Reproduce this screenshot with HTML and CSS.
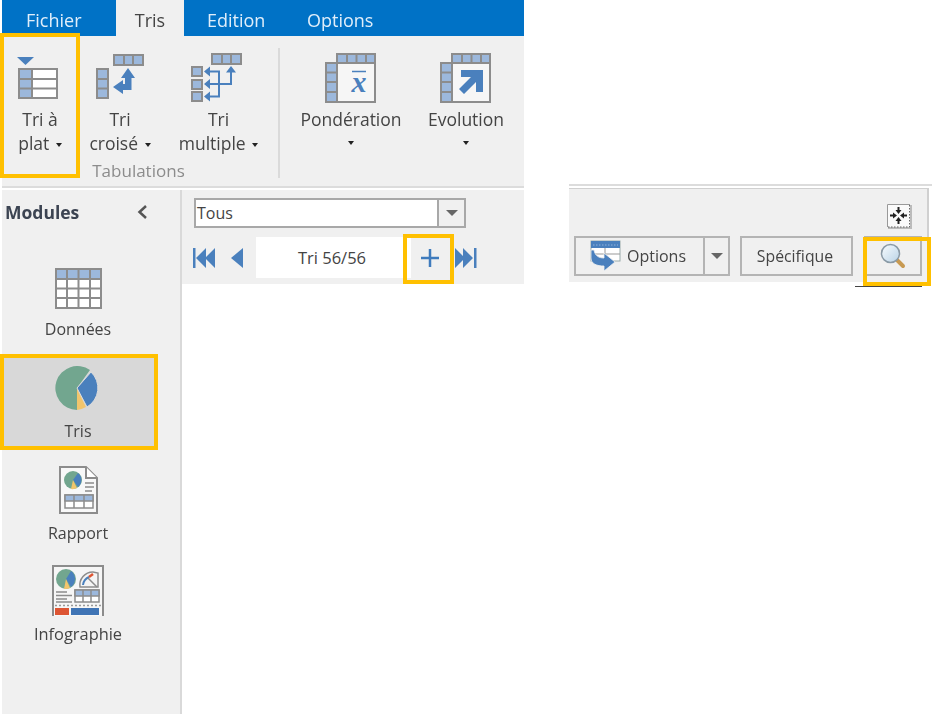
FILE: index.html
```html
<!DOCTYPE html>
<html lang="fr">
<head>
<meta charset="utf-8">
<title>Tris</title>
<link rel="stylesheet" href="styles.css">
</head>
<body>
<div class="canvas">
  <section class="app">
    <nav class="tabs">
      <span class="tab tab-fichier">Fichier</span>
      <span class="tab tab-active">Tris</span>
      <span class="tab tab-edition">Edition</span>
      <span class="tab tab-options">Options</span>
    </nav>
    <div class="ribbon">
      <div class="group">
        <div class="group-buttons">
          <div class="rb rb-plat">
            <svg class="rb-icon rb-icon-plat" width="42" height="52" viewBox="0 0 42 52">
              <path d="M0 5h17l-8.500 8z" fill="#4a80bd"/>
              <rect x="2" y="17" width="38" height="29" fill="#fff" stroke="#8c8c8c" stroke-width="2"/>
              <rect x="2" y="17" width="13" height="29" fill="#9cb8dc" stroke="#8c8c8c" stroke-width="2"/>
              <path d="M2 27h38M2 36.500h38" stroke="#8c8c8c" stroke-width="2"/>
            </svg>
            <span class="rb-text">Tri à</span>
            <span class="rb-text">plat <i class="caret"></i></span>
            <span class="hl hl-plat"></span>
          </div>
          <div class="rb rb-croise">
            <svg class="rb-icon" width="48" height="52" viewBox="0 0 48 52">
              <rect x="18" y="3" width="29" height="10" fill="#9cb8dc" stroke="#8c8c8c" stroke-width="2"/>
              <path d="M28 3v10M37 3v10" stroke="#8c8c8c" stroke-width="2"/>
              <rect x="1" y="17" width="11" height="29" fill="#9cb8dc" stroke="#8c8c8c" stroke-width="2"/>
              <path d="M1 27h11M1 36.500h11" stroke="#8c8c8c" stroke-width="2"/>
              <path d="M32 16L39 26H35.500V38H27V42L17 35L27 28V32H29V26H25Z" fill="#4a80bd"/>
            </svg>
            <span class="rb-text">Tri</span>
            <span class="rb-text">croisé <i class="caret"></i></span>
          </div>
          <div class="rb rb-multiple">
            <svg class="rb-icon rb-icon-multi" width="52" height="52" viewBox="0 0 52 52">
              <rect x="21" y="2" width="29" height="10" fill="#9cb8dc" stroke="#8c8c8c" stroke-width="2"/>
              <path d="M31 2v10M40 2v10" stroke="#8c8c8c" stroke-width="2"/>
              <g fill="#9cb8dc" stroke="#8c8c8c" stroke-width="2">
                <rect x="1" y="15" width="10" height="9"/>
                <rect x="1" y="28" width="10" height="9"/>
                <rect x="1" y="40" width="10" height="9"/>
              </g>
              <path d="M17 19.500h11v25H17M17 32h23V20" fill="none" stroke="#4a80bd" stroke-width="2"/>
              <path d="M13 19.500l6-5v10zM13 32l6-5v10zM13 44.500l6-5v10zM40 14l5 6.500H35z" fill="#4a80bd"/>
            </svg>
            <span class="rb-text">Tri</span>
            <span class="rb-text">multiple <i class="caret"></i></span>
          </div>
        </div>
        <div class="group-label">Tabulations</div>
      </div>
      <div class="ribbon-sep"></div>
      <div class="rb rb-pond">
        <svg class="rb-icon" width="52" height="52" viewBox="0 0 52 52">
          <rect x="12" y="2" width="38" height="48" fill="#f6f6f6" stroke="#8c8c8c" stroke-width="2"/>
          <rect x="12" y="2" width="38" height="9" fill="#9cb8dc" stroke="#8c8c8c" stroke-width="2"/>
          <path d="M22 2v9M31.500 2v9M41 2v9" stroke="#8c8c8c" stroke-width="2"/>
          <rect x="1" y="11" width="11" height="39" fill="#9cb8dc" stroke="#8c8c8c" stroke-width="2"/>
          <path d="M1 20.500h11M1 30h11M1 40h11" stroke="#8c8c8c" stroke-width="2"/>
          <path d="M27 19.500h14" stroke="#4a80bd" stroke-width="1.500"/>
          <text x="34" y="40" class="xbar">x</text>
        </svg>
        <span class="rb-text">Pondération</span>
        <i class="caret caret-solo"></i>
      </div>
      <div class="rb rb-evol">
        <svg class="rb-icon" width="52" height="52" viewBox="0 0 52 52">
          <rect x="12" y="2" width="38" height="48" fill="#f6f6f6" stroke="#8c8c8c" stroke-width="2"/>
          <rect x="12" y="2" width="38" height="9" fill="#9cb8dc" stroke="#8c8c8c" stroke-width="2"/>
          <path d="M22 2v9M31.500 2v9M41 2v9" stroke="#8c8c8c" stroke-width="2"/>
          <rect x="1" y="11" width="11" height="39" fill="#9cb8dc" stroke="#8c8c8c" stroke-width="2"/>
          <path d="M1 20.500h11M1 30h11M1 40h11" stroke="#8c8c8c" stroke-width="2"/>
          <path d="M21 18h22v22h-7V30L24 42l-5-5 12-12H21z" fill="#4a80bd"/>
        </svg>
        <span class="rb-text">Evolution</span>
        <i class="caret caret-solo"></i>
      </div>
    </div>
    <div class="work">
      <aside class="sidebar">
        <header class="side-head">
          <b class="side-title">Modules</b>
          <svg class="chevron" width="12" height="16" viewBox="0 0 12 16"><path d="M10 2L3.500 8l6.500 6" fill="none" stroke="#555" stroke-width="2.500"/></svg>
        </header>
        <div class="mod mod-donnees">
          <svg class="mod-icon" width="47" height="41" viewBox="0 0 47 41">
            <rect x="1" y="1" width="45" height="39" fill="#fff" stroke="#8c8c8c" stroke-width="2"/>
            <rect x="1" y="1" width="45" height="10" fill="#9cb8dc" stroke="#8c8c8c" stroke-width="2"/>
            <path d="M12 1v39M23.500 1v39M35 1v39M1 20.500h45M1 30h45" stroke="#8c8c8c" stroke-width="2"/>
          </svg>
          <span class="mod-label">Données</span>
        </div>
        <div class="mod mod-tris">
          <svg class="mod-icon" width="46" height="46" viewBox="0 0 46 46">
            <path d="M22 22L35 4A22 22 0 1 0 22 44z" fill="#72a68f"/>
            <path d="M22 22l14-16a22 22 0 0 1-4 35z" fill="#4a80bd" stroke="#dcdcdc" stroke-width="1"/>
            <path d="M22 23l9 18a22 22 0 0 1-9 3z" fill="#f2c56c"/>
          </svg>
          <span class="mod-label">Tris</span>
          <span class="hl hl-tris"></span>
        </div>
        <div class="mod mod-rapport">
          <svg class="mod-icon" width="39" height="48" viewBox="0 0 39 48">
            <path d="M1 1h26l11 11v35H1z" fill="#f8f8f8" stroke="#8c8c8c" stroke-width="2"/>
            <path d="M27 1v11h11" fill="#fff" stroke="#8c8c8c" stroke-width="2"/>
            <circle cx="14" cy="14" r="9" fill="#72a68f"/>
            <path d="M14 14l5-7a9 9 0 0 1 0 14z" fill="#4a80bd"/>
            <path d="M14 14l4 8a9 9 0 0 1-6 1z" fill="#f2c56c"/>
            <path d="M26 17h9M26 21h9M26 25h7" stroke="#8c8c8c" stroke-width="1.500"/>
            <rect x="6" y="29" width="28" height="13" fill="#fff" stroke="#8c8c8c" stroke-width="1.500"/>
            <rect x="6" y="29" width="28" height="6" fill="#9cb8dc" stroke="#8c8c8c" stroke-width="1.500"/>
            <path d="M15 29v13M25 29v13" stroke="#8c8c8c" stroke-width="1.500"/>
          </svg>
          <span class="mod-label">Rapport</span>
        </div>
        <div class="mod mod-info">
          <svg class="mod-icon" width="52" height="51" viewBox="0 0 52 51">
            <path d="M1 51V1h50v50" fill="#f6f6f6" stroke="#8c8c8c" stroke-width="2"/>
            <circle cx="14" cy="14" r="10" fill="#72a68f"/>
            <path d="M14 14l5-8a10 10 0 0 1 0 16z" fill="#4a80bd"/>
            <path d="M14 14l4 9a10 10 0 0 1-6 1z" fill="#f2c56c"/>
            <path d="M28 22a13 13 0 0 1 13-15l5 1v14z" fill="#f4f4f4" stroke="#8c8c8c" stroke-width="1.500"/>
            <path d="M31 20a10 10 0 0 1 6-8" fill="none" stroke="#4a80bd" stroke-width="2"/>
            <path d="M37 12l4-3" stroke="#dd5533" stroke-width="2.500"/>
            <path d="M36 13l9 9" stroke="#8c8c8c" stroke-width="1.500"/>
            <path d="M4 27h11M4 30.500h16M4 34h11M4 37h16" stroke="#8c8c8c" stroke-width="1.300"/>
            <rect x="23" y="25" width="24" height="12" fill="#fff" stroke="#8c8c8c" stroke-width="1.500"/>
            <rect x="23" y="25" width="24" height="6" fill="#9cb8dc" stroke="#8c8c8c" stroke-width="1.500"/>
            <path d="M31 25v12M39 25v12" stroke="#8c8c8c" stroke-width="1.500"/>
            <path d="M3 40.500h46" stroke="#999" stroke-width="1.500" stroke-dasharray="2 2"/>
            <rect x="3" y="43" width="14" height="7" fill="#dd5533"/>
            <rect x="19" y="43" width="28" height="7" fill="#3f74b5"/>
          </svg>
          <span class="mod-label">Infographie</span>
        </div>
      </aside>
      <main class="main">
        <div class="toolbar">
          <div class="combo">
            <span class="combo-value">Tous</span>
            <span class="combo-btn"><i class="tri-down"></i></span>
          </div>
          <div class="pager">
            <svg class="pg pg-first" width="23" height="22" viewBox="0 0 23 22"><path d="M1 1h2.500v20H1zM14 1v20L4 11zM23 1v20L13 11z" fill="#4a80bd"/></svg>
            <svg class="pg pg-prev" width="13" height="22" viewBox="0 0 13 22"><path d="M13 1v20L1 11z" fill="#4a80bd"/></svg>
            <div class="pg-field">
              <span class="pg-value">Tri 56/56</span>
              <span class="pg-add">
                <svg width="18" height="18" viewBox="0 0 18 18"><path d="M9 0v18M0 9h18" stroke="#3f7bbd" stroke-width="2.500"/></svg>
                <span class="hl hl-add"></span>
              </span>
            </div>
            <svg class="pg pg-last" width="22" height="22" viewBox="0 0 22 22"><path d="M0 1v20L10 11zM8 1v20L18 11zM19 1h2.500v20H19z" fill="#4a80bd"/></svg>
          </div>
        </div>
      </main>
    </div>
  </section>

  <section class="panel">
    <div class="panel-row-top">
      <svg width="25" height="25" viewBox="0 0 25 25">
        <rect x="1" y="1" width="24" height="24" fill="#bbb"/>
        <rect x="0" y="0" width="23" height="23" fill="#fafafa"/>
        <path d="M.5 23V.500H23" fill="none" stroke="#999"/>
        <path d="M22.500 1v22H1" fill="none" stroke="#666" stroke-dasharray="1.500 1.500"/>
        <g fill="#222">
          <path d="M10.500 3h2v3h2l-3 4-3-4h2z"/>
          <path d="M10.500 20h2v-3h2l-3-4-3 4h2z"/>
          <path d="M3 10.500v2h3v2l4-3-4-3v2z"/>
          <path d="M20 10.500v2h-3v2l-4-3 4-3v2z"/>
        </g>
      </svg>
    </div>
    <div class="panel-row">
      <div class="split">
        <span class="split-main">
          <svg width="32" height="32" viewBox="0 0 32 32">
            <rect x="1" y="1" width="29" height="20" fill="#fff" stroke="#9aa" stroke-width="1"/>
            <rect x="1" y="1" width="29" height="7" fill="#4a80bd"/>
            <path d="M3 5h25" stroke="#8fb2dc" stroke-dasharray="1.500 1.500"/>
            <path d="M1 14h29M15 8v13" stroke="#999" stroke-width="1"/>
            <path d="M1 10v8c0 6 6 8 13 8v5l11-9-11-9v5c-5 0-9-2-10-8z" fill="#4a80bd" stroke="#f0f0f0" stroke-width=".8"/>
          </svg>
          Options
        </span>
        <span class="split-arrow"><i class="tri-down"></i></span>
      </div>
      <span class="btn btn-spec">Spécifique</span>
      <span class="btn btn-search">
        <svg width="26" height="26" viewBox="0 0 26 26">
          <defs>
            <linearGradient id="lens" x1="0" y1="0" x2="1" y2="1">
              <stop offset="0" stop-color="#f8fcff"/>
              <stop offset="1" stop-color="#b9d3e6"/>
            </linearGradient>
          </defs>
          <path d="M17 17l6 6" stroke="#c89a52" stroke-width="4" stroke-linecap="round"/>
          <circle cx="10.500" cy="10.500" r="9" fill="url(#lens)" stroke="#8a9aa6" stroke-width="1.500"/>
        </svg>
        <span class="hl hl-search"></span>
      </span>
    </div>
    <div class="panel-foot"></div>
  </section>
</div>
</body>
</html>
```
FILE: styles.css
```css
* { box-sizing: border-box; }
html, body { margin: 0; padding: 0; background: #fff; }
body { font-family: "Open Sans", "Noto Sans", sans-serif; color: #444; font-size: 16px; }
i { font-style: normal; }

.canvas { position: relative; width: 932px; height: 714px; overflow: hidden; filter: blur(0.4px); }
.app { position: absolute; left: 0; top: 0; width: 524px; height: 714px; display: flex; flex-direction: column; }
.panel { position: absolute; left: 569px; top: 184px; width: 363px; height: 104px; }

.hl { position: absolute; border: 4px solid #ffc000; pointer-events: none; }

/* tabs */
.tabs { height: 36px; margin-left: 2px; background: #0072c6; display: flex; color: #e0eefa; font-size: 18px; line-height: 40px; }
.tab { display: block; height: 36px; white-space: nowrap; }
.tab-fichier { width: 114px; padding-left: 24px; }
.tab-active { width: 68px; background: #f0f0f0; color: #444; text-align: center; }
.tab-edition { width: 100px; padding-left: 23px; }
.tab-options { padding-left: 23px; }

/* ribbon */
.ribbon { height: 152px; margin-left: 2px; padding-top: 16px; background: #f0f0f0; border-bottom: 2px solid #dcdcdc; display: flex; flex: none; font-size: 17.5px; }
.group { width: 273px; }
.group-buttons { display: flex; }
.group-label { text-align: center; color: #8c8c8c; line-height: 20px; margin-top: 6px; font-size: 17px; }
.rb { position: relative; display: flex; flex-direction: column; align-items: center; }
.rb-icon { display: block; margin-bottom: 3px; flex: none; }
.rb-icon-plat { margin-right: 4px; }
.rb-icon-multi { margin-right: 4px; }
.rb-text { line-height: 24px; white-space: nowrap; }
.rb-plat { width: 76px; }
.rb-croise { width: 84px; }
.rb-multiple { width: 113px; }
.rb-pond { width: 122px; margin-left: 10px; }
.rb-evol { width: 108px; }
.ribbon-sep { width: 2px; height: 130px; margin: -4px 0 0 3px; background: #dadada; }
.hl-plat { left: -2px; top: -19px; width: 80px; height: 145px; }
.caret { display: inline-block; width: 0; height: 0; border: 3.500px solid transparent; border-top: 4px solid #222; border-bottom: 0; vertical-align: 3px; margin-left: 2px; }
.caret-solo { display: block; margin: 10px 0 0; }
.xbar { font-family: "Liberation Serif", serif; font-style: italic; font-weight: bold; font-size: 30px; fill: #4a80bd; text-anchor: middle; }

/* work area */
.work { flex: 1; display: flex; min-height: 0; margin-top: 2px; }
.sidebar { width: 178px; margin-left: 2px; background: #f0f0f0; flex: none; }
.side-head { height: 44px; display: flex; align-items: center; justify-content: space-between; padding: 0 32px 0 3px; }
.side-title { font-weight: 700; font-size: 17.5px; color: #3c4452; }
.chevron { display: block; }
.mod { position: relative; width: 156px; margin-left: -2px; display: flex; flex-direction: column; align-items: center; }
.mod-icon { display: block; flex: none; }
.mod-label { line-height: 24px; white-space: nowrap; }
.mod-donnees { margin-top: 34px; }
.mod-donnees .mod-label { margin-top: 8px; }
.mod-tris { height: 94px; margin-top: 14px; padding-top: 11px; background: #d8d8d8; }
.mod-tris .mod-label { margin-top: 7px; }
.mod-rapport { margin-top: 17px; }
.mod-rapport .mod-label { margin-top: 7px; }
.mod-info { margin-top: 20px; }
.mod-info .mod-label { margin-top: 6px; font-size: 16.4px; }
.hl-tris { left: 0; top: -1px; width: 158px; height: 96px; }

.main { flex: 1; border-left: 2px solid #d9d9d9; background: #fff; min-width: 0; }
.toolbar { height: 94px; background: #f0f0f0; padding: 8px 0 0 12px; }
.combo { width: 272px; height: 30px; background: #fff; border: 2px solid #a8a8a8; display: flex; align-items: stretch; line-height: 26px; }
.combo-value { flex: 1; padding-left: 1px; }
.combo-btn { width: 27px; background: #f0f0f0; border-left: 2px solid #a8a8a8; display: flex; align-items: center; justify-content: center; }
.tri-down { display: block; width: 0; height: 0; border: 6px solid transparent; border-top: 6px solid #666; border-bottom: 0; }

.pager { display: flex; align-items: center; margin-top: 9px; height: 41px; margin-left: -2px; }
.pg { display: block; flex: none; }
.pg-prev { margin-left: 15px; }
.pg-field { width: 155px; height: 41px; margin-left: 13px; background: #fff; display: flex; align-items: center; position: relative; }
.pg-value { width: 152px; text-align: center; font-size: 16.5px; }
.pg-add { position: absolute; left: 147px; top: 0; width: 51px; height: 41px; display: flex; align-items: center; justify-content: center; padding-left: 2px; }
.hl-add { left: 0; top: -3px; width: 51px; height: 50px; }
.pg-last { margin-left: 44px; }

/* right panel */
.panel { border-top: 2px solid #dcdcdc; }
.panel-row-top { margin-top: 2px; height: 48px; background: #f0f0f0; border-top: 1px solid #d0d0d0; border-right: 2px solid #d0d0d0; width: 360px; padding: 15px 0 0 318px; }
.panel-row-top svg { display: block; }
.panel-row { height: 46px; width: 360px; background: #f0f0f0; border-right: 2px solid #d0d0d0; display: flex; padding: 0 0 0 5px; }
.split { display: flex; width: 156px; height: 40px; border: 2px solid #b4b4b4; flex: none; }
.split-main { flex: 1; display: flex; align-items: center; gap: 5px; padding-left: 14px; border-right: 2px solid #b4b4b4; }
.split-arrow { width: 23px; display: flex; align-items: center; justify-content: center; }
.btn { display: flex; align-items: center; justify-content: center; height: 40px; width: 113px; margin-left: 10px; border: 2px solid #b4b4b4; flex: none; position: relative; }
.btn-spec { font-size: 15.8px; padding-right: 3px; }
.btn-search { width: 58px; margin-left: 11px; }
.hl-search { left: -3px; top: -1px; width: 68px; height: 49px; }
.panel-foot { width: 67px; height: 1px; margin: 4px 0 0 286px; background: #444; }
```
